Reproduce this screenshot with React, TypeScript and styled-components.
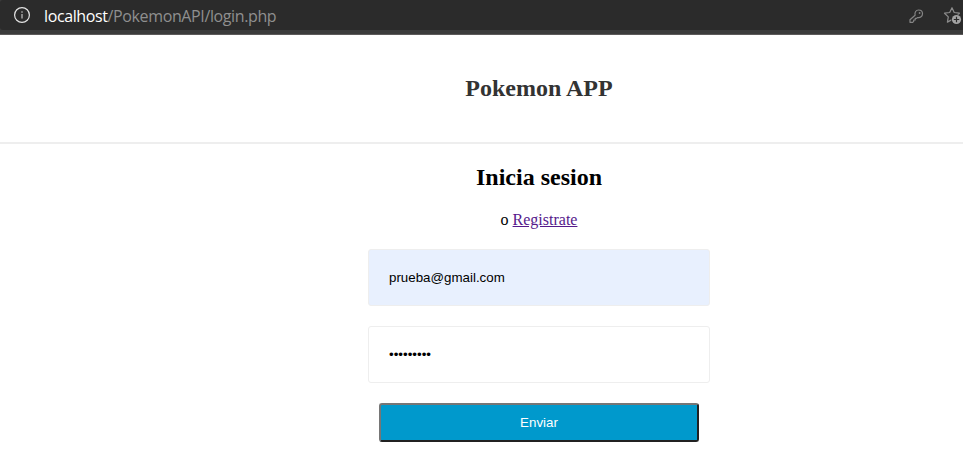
import React from "react";
import styled, { createGlobalStyle } from "styled-components";

const GlobalStyle = createGlobalStyle`
  * { box-sizing: border-box; }
  html, body { margin: 0; padding: 0; overflow: hidden; background: #fff; }
  body { font-family: "Liberation Serif", "Times New Roman", serif; font-size: 16px; color: #000; }
`;

const Window = styled.div`
  width: 100%;
  height: 470px;
  overflow: hidden;
`;

const Chrome = styled.div`
  height: 35px;
  background: #3b3b3b;
  border-bottom: 1px solid #5c5a5a;
`;

const AddressBar = styled.div`
  display: flex;
  align-items: center;
  height: 30px;
  padding-left: 13px;
  background: #2b2b2b;
  border-radius: 3px 0 0 3px;
`;

const Url = styled.div`
  flex: 1;
  margin-left: 13px;
  padding-top: 1px;
  font: 16px/30px "Open Sans", "Noto Sans", sans-serif;
  letter-spacing: -0.38px;
  color: #8f8f8f;
  white-space: pre;
`;

const Host = styled.span`
  color: #fff;
`;

const Tools = styled.div`
  display: flex;
  align-items: center;
  gap: 19px;
  padding-top: 2px;
`;

const Page = styled.div`
  width: 1078px;
  text-align: center;
`;

const Header = styled.header`
  height: 109px;
  padding-top: 39px;
  border-bottom: 2px solid #eee;
`;

const Brand = styled.h2`
  margin: 0;
  font-size: 24px;
  line-height: 28px;
  color: #333;
`;

const Title = styled.h1`
  margin: 19px 0 0;
  font-size: 24px;
  line-height: 28px;
`;

const Hint = styled.p`
  margin: 20px 0;
  line-height: 18px;
`;

const Link = styled.a`
  color: #551a8b;
  text-decoration: underline;
`;

const Form = styled.form`
  display: flex;
  flex-direction: column;
  align-items: center;
  gap: 20px;
`;

const Field = styled.input<{ $filled?: boolean }>`
  width: 342px;
  height: 57px;
  padding: 0 20px;
  border: 1px solid #eee;
  border-radius: 3px;
  outline: none;
  font: 13.333px "Liberation Sans", Arial, sans-serif;
  color: #000;
  background: ${(p) => (p.$filled ? "#e8f0fe" : "#fff")};
`;

const Submit = styled.button`
  width: 320px;
  height: 39px;
  padding: 0;
  border: 2px solid;
  border-color: #767676 #212121 #212121 #767676;
  border-radius: 3px;
  font: 13.333px "Liberation Sans", Arial, sans-serif;
  color: #fff;
  background: #0099cc;
`;

const InfoIcon = () => (
  <svg width="18" height="18" viewBox="0 0 18 18" fill="none">
    <circle cx="9" cy="9" r="7.4" stroke="#e3e3e3" strokeWidth="1.2" />
    <path d="M9 8v4.5M9 5.3v1.4" stroke="#b5b5b5" strokeWidth="1.3" />
  </svg>
);

const KeyIcon = () => (
  <svg width="16" height="18" viewBox="0 0 16 18" fill="none" stroke="#858585" strokeWidth="1.2">
    <path
      d="M7.1 8.2C6.4 5.2 8 3 10.6 3c2.2 0 3.9 1.6 3.9 3.8 0 2.6-2.2 4.3-4.9 3.7L8.5 11.4H7.2V13H5.7v1.3l-1 1H2V12.8Z"
      strokeLinejoin="round"
    />
    <circle cx="11.6" cy="6" r="0.9" fill="#858585" stroke="none" />
  </svg>
);

const StarPlusIcon = () => (
  <svg width="20" height="20" viewBox="0 0 20 20" fill="none">
    <path
      d="M9 1.7 11.2 6.5l5.2.7-3.8 3.7.9 5.2L9 13.6l-4.6 2.5.9-5.2L1.5 7.2 6.7 6.5Z"
      stroke="#8c8c8c"
      strokeWidth="1.2"
      strokeLinejoin="round"
    />
    <circle cx="13.5" cy="13.5" r="5.3" fill="#2b2b2b" />
    <circle cx="13.5" cy="13.5" r="4.6" fill="#a3a3a3" />
    <path d="M13.5 10.8v5.4M10.8 13.5h5.4" stroke="#2b2b2b" strokeWidth="1.2" />
  </svg>
);

export default function App() {
  return (
    <Window>
      <GlobalStyle />
      <Chrome>
        <AddressBar>
          <InfoIcon />
          <Url>
            <Host>localhost</Host>/PokemonAPI/login.php
          </Url>
          <Tools>
            <KeyIcon />
            <StarPlusIcon />
          </Tools>
        </AddressBar>
      </Chrome>
      <Page>
        <Header>
          <Brand>Pokemon APP</Brand>
        </Header>
        <Title>Inicia sesion</Title>
        <Hint>
          o <Link href="#">Registrate</Link>
        </Hint>
        <Form>
          <Field $filled type="text" defaultValue="prueba@gmail.com" />
          <Field type="password" defaultValue="prueba123" />
          <Submit type="button">Enviar</Submit>
        </Form>
      </Page>
    </Window>
  );
}
